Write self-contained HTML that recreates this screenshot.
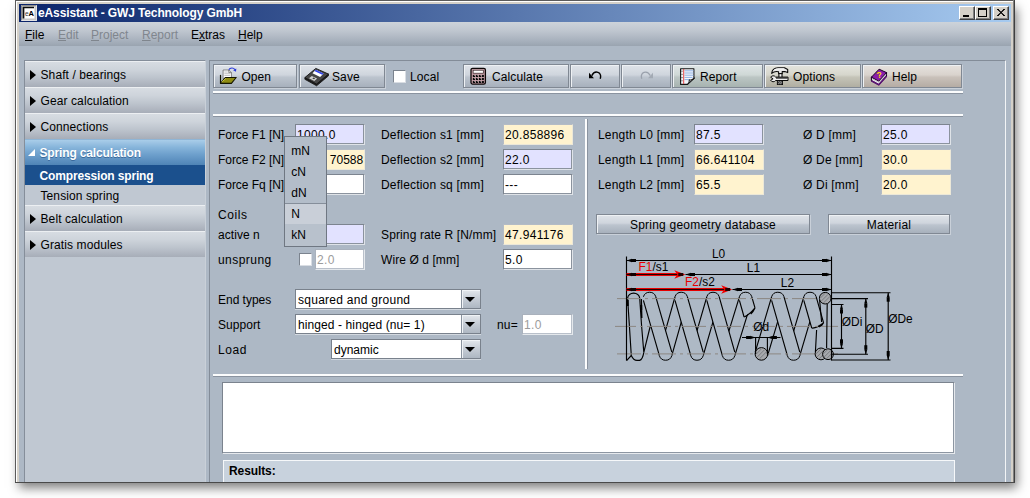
<!DOCTYPE html>
<html>
<head>
<meta charset="utf-8">
<title>eAssistant - GWJ Technology GmbH</title>
<style>
html,body{margin:0;padding:0;background:#fff;}
body{width:1030px;height:498px;overflow:hidden;position:relative;font-family:"Liberation Sans",sans-serif;font-size:12px;color:#000;}
.abs{position:absolute;}
div,span,i,b{box-sizing:border-box;}
#shadow{position:absolute;left:20px;top:6px;width:992px;height:474px;box-shadow:2px 5px 10px 3px rgba(0,0,0,.5);}
#frame{position:absolute;left:15px;top:0;width:1000px;height:483px;background:#d4d0c8;border-left:1px solid #5a5a5a;border-top:1px solid #5a5a5a;}
#frame2{position:absolute;left:16px;top:1px;width:997px;height:482px;border-left:1px solid #fff;border-top:1px solid #fff;}
#frameR{position:absolute;left:1013px;top:0;width:2px;height:483px;background:linear-gradient(90deg,#808080 50%,#404040 50%);}
#frameB{position:absolute;left:15px;top:482px;width:1000px;height:1px;background:#4a4a4a;}
#client{position:absolute;left:19px;top:22px;width:992px;height:460px;background:#adb8c5;}
#title{position:absolute;left:19px;top:4px;width:992px;height:18px;background:linear-gradient(90deg,#0a246a 0%,#a6caf0 100%);}
#title .txt{position:absolute;left:19px;top:0.6px;font-weight:bold;font-size:12px;color:#fff;letter-spacing:-0.12px;line-height:16px;white-space:nowrap;}
.cap{position:absolute;top:6px;width:16px;height:14px;background:#d4d0c8;border:1px solid #fff;border-right-color:#404040;border-bottom-color:#404040;box-shadow:inset -1px -1px 0 #808080;}
#menubar{position:absolute;left:19px;top:22px;width:992px;height:24px;background:linear-gradient(180deg,#cdd3da 0%,#c0c7d0 35%,#a9b2be 75%,#9aa4b0 100%);}
#menubar span{position:absolute;top:6px;line-height:15px;white-space:nowrap;}
#menubar .dis{color:#80868e;}
u{text-decoration:underline;text-underline-offset:1px;}
#left{position:absolute;left:24px;top:60px;width:182px;height:422px;background:#c0c8d2;border-left:1px solid #858e9a;border-top:1px solid #858e9a;border-right:1px solid #c9d0d8;}
.acc{position:absolute;left:25px;width:180px;height:26px;background:linear-gradient(180deg,#d7dce2 0%,#ced4db 30%,#bdc4cd 62%,#a7adb8 100%);border-top:1px solid #eceff2;}
.acc span{position:absolute;left:15.5px;top:5px;line-height:16px;white-space:nowrap;letter-spacing:0.1px;}
.acc i{position:absolute;left:5px;top:7.5px;width:0;height:0;border-left:6px solid #000;border-top:5px solid transparent;border-bottom:5px solid transparent;}
.acc.sel{background:linear-gradient(180deg,#a9cde9 0%,#86b4da 30%,#6c9ecb 60%,#4f84b6 100%);border-top:1px solid #8fb5d6;border-bottom:0;color:#fff;font-weight:bold;text-shadow:0 1px 0 #3a6a9c;}
.acc.sel span,.sub.sel span{letter-spacing:-0.15px;left:14.5px;}
.acc.sel i{left:3px;top:9px;border:0;border-bottom:7px solid #fff;border-left:7px solid transparent;}
.sub{position:absolute;left:25px;width:180px;height:20px;}
.sub span{position:absolute;left:15.5px;top:3px;line-height:16px;white-space:nowrap;letter-spacing:0.1px;}
.sub.sel{background:#1b508d;color:#fff;font-weight:bold;}
#main{position:absolute;left:209px;top:60px;width:797px;height:422px;border:1px solid #838c98;border-right-color:#f2f4f6;border-bottom:0;background:#adb8c5;}
.tb{position:absolute;top:64px;height:24px;border:1px solid #808893;background:linear-gradient(180deg,#dfe3e9 0%,#cfd5dd 45%,#bcc4ce 55%,#a7b0bc 100%);box-shadow:inset 1px 1px 0 #eef1f4,1px 1px 0 #c9d0d9;}
.tb span{position:absolute;top:5px;line-height:15px;white-space:nowrap;letter-spacing:0.1px;}
.hsep{position:absolute;height:3px;border-bottom:1px solid #8a93a0;background:#fbfcfd;}
.vsep{position:absolute;width:3px;border-right:1px solid #8a93a0;background:#fbfcfd;}
.lbl{position:absolute;line-height:14px;white-space:nowrap;letter-spacing:0.2px;}
.fld{position:absolute;height:21px;width:70px;border:1px solid #7c848f;border-right-color:#dfe3e8;border-bottom-color:#dfe3e8;box-shadow:inset -1px -1px 0 #8b939e;background:#fff;line-height:21px;padding-left:1px;white-space:nowrap;overflow:hidden;letter-spacing:0.32px;}
.fld.b{background:#e2e2ff;}
.fld.y{background:#fff3cf;border-color:#b4bbc5;border-right-color:#ece8d8;border-bottom-color:#ece8d8;box-shadow:none;}
.fld.g{color:#9c9c9c;border-color:#a9b1bc;border-right-color:#e4e8ec;border-bottom-color:#e4e8ec;box-shadow:inset -1px -1px 0 #b9c0ca;}
.btn{position:absolute;height:20px;border:1px solid #808893;background:linear-gradient(180deg,#dfe3e9 0%,#cfd5dd 45%,#bcc4ce 55%,#a7b0bc 100%);box-shadow:inset 1px 1px 0 #eef1f4,1px 1px 0 #c9d0d9;text-align:center;line-height:20px;letter-spacing:0.22px;}
.combo{position:absolute;height:20px;border:1px solid #79818c;box-shadow:0 1px 0 #d3d9e0;background:#fff;line-height:20px;padding-left:2px;white-space:nowrap;letter-spacing:0.27px;}
.combo b{position:absolute;right:0;top:0;width:19px;height:18px;box-shadow:inset 1px 1px 0 #f0f3f6;background:linear-gradient(180deg,#e3e7ec,#c5ccd5 50%,#aeb7c2);border-left:1px solid #8a939f;}
.combo b:after{content:"";position:absolute;left:3.3px;top:6.500px;border-top:5px solid #000;border-left:5px solid transparent;border-right:5px solid transparent;}
#popup{position:absolute;left:284px;top:136px;width:43px;height:111px;border:1px solid #6f7782;background:#b3bdc9;}
#popup span{position:absolute;left:6.3px;line-height:14px;}
</style>
</head>
<body>
<div id="shadow"></div>
<div id="frame"></div><div id="frame2"></div><div id="frameR"></div>
<div id="client"></div>
<div id="title">
  <svg class="abs" style="left:2px;top:1px" width="16" height="16" viewBox="0 0 16 16"><rect width="16" height="16" fill="#c6c6c6"/><path d="M.5 15.500V.5H15.500" stroke="#8e8e8e" stroke-width="1" fill="none"/><path d="M15.500.5V15.500H.5" stroke="#e4e4e4" stroke-width="1" fill="none"/><rect x="2" y="2" width="11.500" height="11.500" fill="#fff"/><path d="M2.500 13.500V2.500H13" stroke="#0c0c0c" stroke-width="1.700" fill="none"/><text x="4" y="10.800" font-family="Liberation Sans, sans-serif" font-size="6.500" fill="#333">e</text><text x="7.600" y="10.800" font-family="Liberation Sans, sans-serif" font-size="7.500" font-weight="bold" fill="#000">A</text></svg>
  <div class="txt">eAssistant - GWJ Technology GmbH</div>
</div>
<div class="cap" style="left:959px"><i class="abs" style="left:3px;top:8px;width:6px;height:2px;background:#000"></i></div>
<div class="cap" style="left:975px"><i class="abs" style="left:2px;top:1px;width:9px;height:9px;border:1px solid #000;border-top-width:2px"></i></div>
<div class="cap" style="left:993px"><svg class="abs" style="left:3px;top:2px" width="8" height="7" viewBox="0 0 8 7"><path d="M0 0L8 7M1 0L7 7M8 0L0 7M7 0L1 7" stroke="#000" stroke-width="1"/></svg></div>
<div id="menubar">
  <span style="left:6px"><u>F</u>ile</span>
  <span class="dis" style="left:39px"><u>E</u>dit</span>
  <span class="dis" style="left:72px"><u>P</u>roject</span>
  <span class="dis" style="left:123px"><u>R</u>eport</span>
  <span style="left:172px">E<u>x</u>tras</span>
  <span style="left:219px"><u>H</u>elp</span>
</div>
<div id="left"></div>
<div class="acc" style="top:61px"><i></i><span>Shaft / bearings</span></div>
<div class="acc" style="top:87px"><i></i><span>Gear calculation</span></div>
<div class="acc" style="top:113px"><i></i><span>Connections</span></div>
<div class="acc sel" style="top:139px"><i></i><span>Spring calculation</span></div>
<div class="sub sel" style="top:165px"><span>Compression spring</span></div>
<div class="sub" style="top:185px"><span>Tension spring</span></div>
<div class="acc" style="top:205px"><i></i><span>Belt calculation</span></div>
<div class="acc" style="top:231px"><i></i><span>Gratis modules</span></div>
<div id="main"></div>
<div class="tb" style="left:213px;width:84px"><svg class="abs" style="left:4px;top:1px" width="20" height="20" viewBox="0 0 20 20"><path d="M2.500 8.900V17.400" stroke="#151500" stroke-width="1.200"/><path d="M5.100 4h5.700l2.600 2.700v6.100H5.100z" fill="#fff" stroke="#6a6a6a" stroke-width=".8" stroke-linejoin="round"/><path d="M10.800 4v2.700h2.600" fill="none" stroke="#555" stroke-width=".7"/><path d="M6.300 6h3.500M6.300 7.700h5.800M6.300 9.400h5.800" stroke="#b4b4b4" stroke-width=".8"/><path d="M2.500 17.400H13.400L18.200 11.500H7.300z" fill="#8f8c12" stroke="#151500" stroke-width="1.100" stroke-linejoin="round"/><path d="M3.600 16.200l4.200-3.800" stroke="#d9d24a" stroke-width=".9"/><path d="M10.800 3.800C12 1.600 15.600 1.400 17 3.800" fill="none" stroke="#2a39d8" stroke-width="1.100"/><path d="M18.300 2.400l-.3 3.400-2.900-1.500z" fill="#2a39d8"/></svg><span style="left:27.4px">Open</span></div>
<div class="tb" style="left:299px;width:86px"><svg class="abs" style="left:4px;top:2px" width="25" height="20" viewBox="0 0 25 20"><path d="M.9 10.600v1.700l11.700 6.500 11.900-10v-1.700z" fill="#1c1c1c" stroke="#111" stroke-width=".8" stroke-linejoin="round"/><path d="M.9 10.600L11.800 1.400l12.700 5.700-11.900 10z" fill="#464646" stroke="#161616" stroke-width=".9" stroke-linejoin="round"/><path d="M11.700 2.800l7.900 3.600-3.500 3.500-7.600-3.700z" fill="#fff"/><path d="M11.700 2.800l7.900 3.600-1.300 1.300-8-3.600z" fill="#2f43ea"/><path d="M5 11.300l2.800-2.400 5.300 2.700-2.800 2.500z" fill="#cfcfcf"/><path d="M8.300 11.400l1.200-1 1.700.9-1.200 1z" fill="#3a3a3a"/></svg><span style="left:32px">Save</span></div>
<div class="abs" style="left:393px;top:70px;width:13px;height:13px;background:#fff;border:1px solid #7b838e;border-right-color:#d9dde3;border-bottom-color:#d9dde3"></div>
<div class="lbl" style="left:410px;top:70px;letter-spacing:.1px">Local</div>
<div class="tb" style="left:463px;width:106px"><svg class="abs" style="left:6px;top:2px" width="17" height="19" viewBox="0 0 17 19"><rect x="1" y="1.300" width="14.400" height="15.800" rx="1.600" fill="#cba4ac" stroke="#0c0606" stroke-width="1.300"/><rect x="3.100" y="3.200" width="10.200" height="3" fill="#fff" stroke="#2a1a1c" stroke-width=".7"/><g fill="#0a0a0a"><rect x="2.800" y="7.900" width="2.300" height="2.100"/><rect x="5.900" y="7.900" width="2.300" height="2.100"/><rect x="9" y="7.900" width="2.300" height="2.100"/><rect x="12" y="7.900" width="1.900" height="2.100"/><rect x="2.800" y="10.900" width="2.300" height="2.100"/><rect x="5.900" y="10.900" width="2.300" height="2.100"/><rect x="9" y="10.900" width="2.300" height="2.100"/><rect x="12" y="10.900" width="1.900" height="2.100"/><rect x="2.800" y="13.900" width="2.300" height="2.100"/><rect x="5.900" y="13.900" width="2.300" height="2.100"/><rect x="9" y="13.900" width="2.300" height="2.100"/><rect x="12" y="13.900" width="1.900" height="2.100"/></g><g fill="#f0e4e6"><rect x="4.300" y="7.900" width=".8" height=".8"/><rect x="7.400" y="7.900" width=".8" height=".8"/><rect x="10.500" y="7.900" width=".8" height=".8"/><rect x="4.300" y="10.900" width=".8" height=".8"/><rect x="7.400" y="10.900" width=".8" height=".8"/><rect x="10.500" y="10.900" width=".8" height=".8"/><rect x="4.300" y="13.900" width=".8" height=".8"/><rect x="7.400" y="13.900" width=".8" height=".8"/><rect x="10.500" y="13.900" width=".8" height=".8"/></g></svg><span style="left:28px">Calculate</span></div>
<div class="tb" style="left:570px;width:50px"><svg class="abs" style="left:17px;top:6px" width="15" height="11" viewBox="0 0 15 11"><path d="M1 1.800v5.400h5z" fill="#000"/><path d="M3.800 4.600C5.200 1.600 8 .7 10 1.300c2.600.8 3.100 3.800 2.200 6.500" fill="none" stroke="#000" stroke-width="1.400"/></svg></div>
<div class="tb" style="left:621px;width:50px"><svg class="abs" style="left:17px;top:6px" width="15" height="11" viewBox="0 0 15 11"><path d="M14 1.800v5.400h-5z" fill="#a3aab4"/><path d="M11.200 4.600C9.800 1.600 7 .7 5 1.300c-2.600.8-3.100 3.800-2.200 6.500" fill="none" stroke="#9aa1ac" stroke-width="1.300"/></svg></div>
<div class="tb" style="left:672px;width:91px;background:linear-gradient(180deg,#dfe5e6 0%,#cfd8d6 45%,#bcc6c4 55%,#a7b3b0 100%)"><svg class="abs" style="left:6px;top:2px" width="18" height="19" viewBox="0 0 18 19"><path d="M1.600 1.700h13.300v9.500l-6.300 6.200h-7z" fill="#f3f6fb" stroke="#141414" stroke-width="1.100" stroke-linejoin="round"/><path d="M5.500 3.800h9M5.500 6h9M5.500 8.200h9M5.500 10.400h8M5.500 12.600h5" stroke="#8fb2e6" stroke-width="1"/><path d="M4.700 2v15" stroke="#e84848" stroke-width="1"/><path d="M2.400 4.200h1.200M2.400 7.400h1.200M2.400 10.600h1.200M2.400 13.800h1.200" stroke="#555" stroke-width="1"/><path d="M8.400 17.400c1.400-1.200 2-2.800 1.800-4.600 1.900.5 3.700-.2 5.500-1.800z" fill="#b9bcc2" stroke="#141414" stroke-width="1" stroke-linejoin="round"/></svg><span style="left:27px">Report</span></div>
<div class="tb" style="left:764px;width:97px;background:linear-gradient(180deg,#e4e4de 0%,#d6d6cc 45%,#c5c4b8 55%,#b0aea2 100%)"><svg class="abs" style="left:3px;top:0" width="22" height="22" viewBox="0 0 22 22"><path d="M3.700 8.300C4 5 6.500 3 10 2.800h6.500l3.200 1.800v3l-2.900-1h-2.600v2h-3.600V6.800C8 6.200 5.500 6.800 3.700 8.300z" fill="#e9e9e9" stroke="#0a0a0a" stroke-width="1.100" stroke-linejoin="round"/><path d="M5.500 5.600c1.400-1.400 3.500-1.900 5.500-1.700h5" stroke="#fff" stroke-width="1" fill="none"/><rect x="10.900" y="8.600" width="3.100" height="10.600" fill="#f6f6f6" stroke="#0a0a0a" stroke-width="1.100"/><path d="M2.700 12.300C3.500 10.400 6.500 10.200 7.600 12.100H20v3.400H7.600C6.500 17.300 3.500 17.100 2.700 15.300L5.100 13.800z" fill="#ededed" stroke="#0a0a0a" stroke-width="1" stroke-linejoin="round"/><path d="M8 13h11.500" stroke="#111" stroke-width="1.200"/><rect x="9.300" y="15.600" width="5.300" height="4" fill="#2e2e2e" stroke="#0a0a0a" stroke-width=".8"/><path d="M10.300 16.700h1M12.300 16.700h1M11.300 17.700h1M13.300 17.700h.8M10.300 18.700h1M12.300 18.700h1" stroke="#c8c8c8" stroke-width=".9"/></svg><span style="left:28px">Options</span></div>
<div class="tb" style="left:862px;width:100px;background:linear-gradient(180deg,#e6e2de 0%,#d9d3cd 45%,#c9c1ba 55%,#b5aca4 100%)"><svg class="abs" style="left:7px;top:3px" width="18" height="18" viewBox="0 0 18 18"><path d="M1.400 9.200v3.600l7.400 3.900 7.700-8.600V4.600z" fill="#f4f0f6" stroke="#1c0026" stroke-width="1.100" stroke-linejoin="round"/><path d="M1.400 12.800l7.400 3.900 7.700-8.600" stroke="#5c1474" stroke-width="1.600" fill="none"/><path d="M2.200 10.800l6.600 3.500 7.200-8" stroke="#b9b2be" stroke-width=".8" fill="none"/><path d="M1.400 9.200l7.700-8 7.400 3.400-7.700 8.500z" fill="#8a1eaa" stroke="#1c0026" stroke-width="1" stroke-linejoin="round"/><text x="9.200" y="10" font-family="Liberation Sans, sans-serif" font-size="8.500" font-weight="bold" fill="#ffe100" text-anchor="middle" transform="rotate(-10 9 7)">?</text></svg><span style="left:29px">Help</span></div>
<div class="hsep" style="left:213px;top:91px;width:750px"></div>
<div class="hsep" style="left:213px;top:114px;width:750px"></div>

<div class="lbl" style="left:218px;top:128px;letter-spacing:-0.05px">Force F1 [N]</div>
<div class="lbl" style="left:218px;top:153px;letter-spacing:-0.05px">Force F2 [N]</div>
<div class="lbl" style="left:218px;top:178px;letter-spacing:-0.05px">Force Fq [N]</div>
<div class="lbl" style="left:218px;top:208px;letter-spacing:0.6px">Coils</div>
<div class="lbl" style="left:218px;top:228px;letter-spacing:0.06px">active n</div>
<div class="lbl" style="left:218px;top:253px;letter-spacing:.45px">unsprung</div>
<div class="lbl" style="left:218px;top:293px;letter-spacing:-0.02px">End types</div>
<div class="lbl" style="left:218px;top:318px;letter-spacing:0.07px">Support</div>
<div class="lbl" style="left:218px;top:343px;letter-spacing:.55px">Load</div>
<div class="fld b" style="left:295px;top:124px">1000.0</div>
<div class="fld y" style="left:295px;top:149px;text-align:right;padding-right:0.8px;letter-spacing:0"><span style="visibility:hidden">47.9</span>70588</div>
<div class="fld" style="left:295px;top:174px">---</div>
<div class="fld b" style="left:295px;top:224px">8.0</div>
<div class="abs" style="left:299px;top:253px;width:13px;height:13px;background:#fff;border:1px solid #7b838e;border-right-color:#d9dde3;border-bottom-color:#d9dde3"></div>
<div class="fld g" style="left:315px;top:249px;width:50px">2.0</div>
<div class="lbl" style="left:381px;top:128px">Deflection s1 [mm]</div>
<div class="lbl" style="left:381px;top:153px">Deflection s2 [mm]</div>
<div class="lbl" style="left:381px;top:178px">Deflection sq [mm]</div>
<div class="lbl" style="left:381px;top:228px;letter-spacing:0.13px">Spring rate R [N/mm]</div>
<div class="lbl" style="left:381px;top:253px;letter-spacing:0.08px">Wire Ø d [mm]</div>
<div class="fld y" style="left:503px;top:124px">20.858896</div>
<div class="fld b" style="left:503px;top:149px">22.0</div>
<div class="fld" style="left:503px;top:174px">---</div>
<div class="fld y" style="left:503px;top:224px">47.941176</div>
<div class="fld" style="left:503px;top:249px">5.0</div>
<div class="combo" style="left:295px;top:289px;width:186px">squared and ground<b></b></div>
<div class="combo" style="left:295px;top:314px;width:186px;letter-spacing:.1px">hinged - hinged (nu= 1)<b></b></div>
<div class="combo" style="left:331px;top:339px;width:150px;letter-spacing:0">dynamic<b></b></div>
<div class="lbl" style="left:497px;top:318px">nu=</div>
<div class="fld g" style="left:522px;top:314px;width:51px">1.0</div>
<div class="vsep" style="left:585px;top:119px;height:250px"></div>
<div class="lbl" style="left:598px;top:128px">Length L0 [mm]</div>
<div class="lbl" style="left:598px;top:153px">Length L1 [mm]</div>
<div class="lbl" style="left:598px;top:178px">Length L2 [mm]</div>
<div class="fld b" style="left:694px;top:124px">87.5</div>
<div class="fld y" style="left:694px;top:149px">66.641104</div>
<div class="fld y" style="left:694px;top:174px">65.5</div>
<div class="lbl" style="left:803px;top:128px">Ø D [mm]</div>
<div class="lbl" style="left:803px;top:153px">Ø De [mm]</div>
<div class="lbl" style="left:803px;top:178px">Ø Di [mm]</div>
<div class="fld b" style="left:881px;top:124px">25.0</div>
<div class="fld y" style="left:881px;top:149px">30.0</div>
<div class="fld y" style="left:881px;top:174px">20.0</div>
<div class="btn" style="left:596px;top:214px;width:214px">Spring geometry database</div>
<div class="btn" style="left:828px;top:214px;width:122px">Material</div>
<div id="popup">
  <div class="abs" style="left:0;top:66px;width:41px;height:21px;background:#c9cfd8;border-top:1px solid #858e9a"></div>
  <div class="abs" style="left:0;top:87px;width:41px;height:22px;background:#b8c1cc"></div>
  <span style="top:7px">mN</span><span style="top:28px">cN</span><span style="top:49px">dN</span><span style="top:70px">N</span><span style="top:91px">kN</span>
</div>

<svg class="abs" style="left:615px;top:245px" width="330" height="125" viewBox="0 0 330 125" font-family="Liberation Sans, sans-serif" font-size="11.9px"><path d="M12.6,53.2 A6.1,5.9 0 0 1 24.7,53.2 L26.6,81.0 L28.8,107.3 L35.3,81.0 M12.6,53.2 L14.4,81.0 L16.3,110.5 L11.6,115.6 M16.3,110.5 Q18.5,115.4 22.0,115.4 L24.6,115.4 Q27.6,114.5 28.8,107.3 M26.4,54.0 L26.9,73.0" stroke="#000" stroke-width="1.15" fill="none"/>
<path d="M12.7,55.0 L12.7,61.0 M26.2,60.0 L26.2,65.0" stroke="#000" stroke-width="2" fill="none"/>
<path d="M44.4,107.1 L60.0,51.8 M56.8,110.7 L72.4,55.4" stroke="#000" stroke-width="1.15" fill="none"/>
<path d="M75.8,107.1 L91.8,51.8 M88.2,110.7 L104.2,55.4" stroke="#000" stroke-width="1.15" fill="none"/>
<path d="M107.4,107.1 L124.4,51.8 M119.8,110.7 L136.8,55.4" stroke="#000" stroke-width="1.15" fill="none"/>
<path d="M140.2,107.1 L156.6,51.8 M152.6,110.7 L169.0,55.4" stroke="#000" stroke-width="1.15" fill="none"/>
<path d="M172.4,107.1 L188.8,51.8 M184.8,110.7 L201.2,55.4" stroke="#000" stroke-width="1.15" fill="none"/>
<path d="M28.4,55.4 L44.4,110.7 L56.8,107.1 L40.8,51.8 Z" fill="#aeb9c5" stroke="none"/>
<path d="M28.4,55.4 L44.4,110.7 M56.8,107.1 L40.8,51.8" stroke="#000" stroke-width="1.15" fill="none"/>
<path d="M60.0,55.4 L75.8,110.7 L88.2,107.1 L72.4,51.8 Z" fill="#aeb9c5" stroke="none"/>
<path d="M60.0,55.4 L75.8,110.7 M88.2,107.1 L72.4,51.8" stroke="#000" stroke-width="1.15" fill="none"/>
<path d="M91.8,55.4 L107.4,110.7 L119.8,107.1 L104.2,51.8 Z" fill="#aeb9c5" stroke="none"/>
<path d="M91.8,55.4 L107.4,110.7 M119.8,107.1 L104.2,51.8" stroke="#000" stroke-width="1.15" fill="none"/>
<path d="M124.4,55.4 L129.1,72.0 L140.0,62.9 L136.8,51.8 Z" fill="#aeb9c5" stroke="none"/>
<path d="M124.4,55.4 L129.1,72.0 M140.0,62.9 L136.8,51.8" stroke="#000" stroke-width="1.15" fill="none"/>
<path d="M129.1,72.0 Q133.5,70.6 140.0,62.9 Q138.5,66.3 135.8,69.0" stroke="#000" stroke-width="1.15" fill="none"/>
<path d="M156.6,55.4 L172.4,110.7 L184.8,107.1 L169.0,51.8 Z" fill="#aeb9c5" stroke="none"/>
<path d="M156.6,55.4 L172.4,110.7 M184.8,107.1 L169.0,51.8" stroke="#000" stroke-width="1.15" fill="none"/>
<path d="M188.8,55.4 L196.7,83.0 L208.6,77.8 L201.2,51.8 Z" fill="#aeb9c5" stroke="none"/>
<path d="M188.8,55.4 L196.7,83.0 M208.6,77.8 L201.2,51.8" stroke="#000" stroke-width="1.15" fill="none"/>
<path d="M196.7,83.0 Q201.7,83.6 208.6,77.8 Q207.1,81.2 203.9,82.0" stroke="#000" stroke-width="1.15" fill="none"/>
<path d="M28.4,51.8 A6.5,6.5 0 0 1 40.8,51.8" fill="#aeb9c5" stroke="#000" stroke-width="1"/>
<path d="M60.0,51.8 A6.5,6.5 0 0 1 72.4,51.8" fill="#aeb9c5" stroke="#000" stroke-width="1"/>
<path d="M91.8,51.8 A6.5,6.5 0 0 1 104.2,51.8" fill="#aeb9c5" stroke="#000" stroke-width="1"/>
<path d="M124.4,51.8 A6.5,6.5 0 0 1 136.8,51.8" fill="#aeb9c5" stroke="#000" stroke-width="1"/>
<path d="M156.6,51.8 A6.5,6.5 0 0 1 169.0,51.8" fill="#aeb9c5" stroke="#000" stroke-width="1"/>
<path d="M188.8,51.8 A6.5,6.5 0 0 1 201.2,51.8" fill="#aeb9c5" stroke="#000" stroke-width="1"/>
<path d="M44.4,110.7 A6.5,6.5 0 0 0 56.8,110.7" fill="#aeb9c5" stroke="#000" stroke-width="1"/>
<path d="M75.8,110.7 A6.5,6.5 0 0 0 88.2,110.7" fill="#aeb9c5" stroke="#000" stroke-width="1"/>
<path d="M107.4,110.7 A6.5,6.5 0 0 0 119.8,110.7" fill="#aeb9c5" stroke="#000" stroke-width="1"/>
<path d="M172.4,110.7 A6.5,6.5 0 0 0 184.8,110.7" fill="#aeb9c5" stroke="#000" stroke-width="1"/>
<line x1="2" y1="53.6" x2="223" y2="53.6" stroke="#8c8782" stroke-width="1" stroke-dasharray="24 4 3 4"/>
<line x1="-3" y1="81.4" x2="223" y2="81.4" stroke="#8c8782" stroke-width="1" stroke-dasharray="24 4 3 4"/>
<line x1="2" y1="108.9" x2="223" y2="108.9" stroke="#8c8782" stroke-width="1" stroke-dasharray="24 4 3 4"/>
<circle cx="146.4" cy="108.9" r="6.3" fill="#a6a8ac" stroke="#000" stroke-width="1"/>
<path d="M142.4,111.9 L149.4,104.9 M144.4,113.9 L151.4,106.9 M141.4,108.9 L146.4,103.9" stroke="#6f7276" stroke-width="0.8" fill="none"/>
<circle cx="210.2" cy="53.2" r="5.8" fill="#a6a8ac" stroke="#000" stroke-width="1"/>
<path d="M206.2,56.2 L213.2,49.2 M208.2,58.2 L215.2,51.2 M205.2,53.2 L210.2,48.2" stroke="#6f7276" stroke-width="0.8" fill="none"/>
<circle cx="206.0" cy="108.9" r="5.9" fill="#a6a8ac" stroke="#000" stroke-width="1"/>
<path d="M202.0,111.9 L209.0,104.9 M204.0,113.9 L211.0,106.9 M201.0,108.9 L206.0,103.9" stroke="#6f7276" stroke-width="0.8" fill="none"/>
<circle cx="213.0" cy="109.2" r="5.4" fill="#a6a8ac" stroke="#000" stroke-width="1"/>
<path d="M209.0,112.2 L216.0,105.2 M211.0,114.2 L218.0,107.2 M208.0,109.2 L213.0,104.2" stroke="#6f7276" stroke-width="0.8" fill="none"/>
<path d="M204.6,55.0 L206.6,77.0 M212.2,59.0 L211.6,103.0 M200.4,107.0 L201.6,85.0" stroke="#000" stroke-width="1.15" fill="none"/>
<path d="M11.5,11.5 L11.5,115.5 M216.5,11.5 L216.5,115.5" stroke="#000" stroke-width="1.15" fill="none"/>
<path d="M11.5,15.5 L216.5,15.5 M70.5,29.5 L216.5,29.5 M117.5,44.5 L216.5,44.5" stroke="#000" stroke-width="1.15" fill="none"/>
<path d="M11.5,15.5 L17.0,13.8 L17.0,17.2 Z" fill="#000"/><rect x="16.5" y="14.0" width="4.5" height="3" fill="#000"/>
<path d="M216.5,15.5 L211.0,13.8 L211.0,17.2 Z" fill="#000"/><rect x="207.0" y="14.0" width="4.5" height="3" fill="#000"/>
<path d="M70.5,29.5 L76.0,27.8 L76.0,31.2 Z" fill="#000"/><rect x="75.5" y="28.0" width="4.5" height="3" fill="#000"/>
<path d="M216.5,29.5 L211.0,27.8 L211.0,31.2 Z" fill="#000"/><rect x="207.0" y="28.0" width="4.5" height="3" fill="#000"/>
<path d="M117.5,44.5 L123.0,42.8 L123.0,46.2 Z" fill="#000"/><rect x="122.5" y="43.0" width="4.5" height="3" fill="#000"/>
<path d="M216.5,44.5 L211.0,42.8 L211.0,46.2 Z" fill="#000"/><rect x="207.0" y="43.0" width="4.5" height="3" fill="#000"/>
<path d="M11.5,29.5 L68.0,29.5 M11.5,44.5 L115.0,44.5" stroke="#e80000" stroke-width="3.2" fill="none"/>
<path d="M11.5,29.5 L68.0,29.5 M11.5,44.5 L115.0,44.5" stroke="#200000" stroke-width="1" fill="none"/>
<path d="M70.3,29.5 L59.3,25.2 L62.3,29.5 L59.3,33.8 Z" fill="#f00000"/>
<rect x="63.3" y="28.0" width="5" height="3" fill="#200"/>
<path d="M117.2,44.5 L106.2,40.2 L109.2,44.5 L106.2,48.8 Z" fill="#f00000"/>
<rect x="110.2" y="43.0" width="5" height="3" fill="#200"/>
<path d="M11.5,29.5 L17.0,27.8 L17.0,31.2 Z" fill="#100"/><rect x="16.5" y="28.0" width="4.5" height="3" fill="#100"/>
<path d="M11.5,44.5 L17.0,42.8 L17.0,46.2 Z" fill="#100"/><rect x="16.5" y="43.0" width="4.5" height="3" fill="#100"/>
<path d="M216.5,47.7 L275.5,47.7 M216.5,53.6 L253.0,53.6 M216.5,59.5 L228.5,59.5 M216.5,103.3 L228.5,103.3 M216.5,109.2 L253.0,109.2 M216.5,115.0 L275.5,115.0" stroke="#000" stroke-width="1.15" fill="none"/>
<path d="M226.5,59.5 L226.5,103.3 M250.8,53.6 L250.8,109.2 M273.2,47.7 L273.2,115.0" stroke="#000" stroke-width="1.15" fill="none"/>
<path d="M226.5,59.5 L224.9,64.5 L228.1,64.5 Z" fill="#000"/><rect x="225.0" y="64.5" width="3" height="4" fill="#000"/>
<path d="M226.5,103.3 L224.9,98.3 L228.1,98.3 Z" fill="#000"/><rect x="225.0" y="94.3" width="3" height="4" fill="#000"/>
<path d="M250.8,53.6 L249.2,58.6 L252.4,58.6 Z" fill="#000"/><rect x="249.3" y="58.6" width="3" height="4" fill="#000"/>
<path d="M250.8,109.2 L249.2,104.2 L252.4,104.2 Z" fill="#000"/><rect x="249.3" y="100.2" width="3" height="4" fill="#000"/>
<path d="M273.2,47.7 L271.6,52.7 L274.8,52.7 Z" fill="#000"/><rect x="271.7" y="52.7" width="3" height="4" fill="#000"/>
<path d="M273.2,115.0 L271.6,110.0 L274.8,110.0 Z" fill="#000"/><rect x="271.7" y="106.0" width="3" height="4" fill="#000"/>
<path d="M127.0,92.5 L165.5,92.5 M140.6,92.5 L140.6,109.0 M152.4,92.5 L152.4,109.0" stroke="#000" stroke-width="1.15" fill="none"/>
<path d="M140.6,92.5 L135.1,90.8 L135.1,94.2 Z" fill="#000"/><rect x="131.1" y="91.0" width="4.5" height="3" fill="#000"/>
<path d="M152.4,92.5 L157.9,90.8 L157.9,94.2 Z" fill="#000"/><rect x="157.4" y="91.0" width="4.5" height="3" fill="#000"/>
<text x="97.0" y="13.2" fill="#000" >L0</text>
<text x="131.8" y="27.4" fill="#000" >L1</text>
<text x="165.8" y="42.2" fill="#000" >L2</text>
<text x="23.6" y="25.8"><tspan fill="#e80000">F1</tspan>/s1</text>
<text x="70.0" y="41.2"><tspan fill="#e80000">F2</tspan>/s2</text>
<text x="138.2" y="86.4" fill="#000" >Ød</text>
<text x="226.8" y="80.8" fill="#000" >ØDi</text>
<text x="250.8" y="88.4" fill="#000" >ØD</text>
<text x="273.2" y="77.6" fill="#000" >ØDe</text></svg>
<div class="hsep" style="left:213px;top:374px;width:750px"></div>
<div class="abs" style="left:222px;top:382px;width:733px;height:72px;background:#fff;border:1px solid #7b838e;border-right-color:#e6e9ed;border-bottom-color:#e6e9ed;box-shadow:inset -1px -1px 0 #8d96a2"></div>
<div class="abs" style="left:223px;top:460px;width:732px;height:23px;background:#c8d2dd;border:1px solid #f6f8fa;border-bottom:0"></div>
<div class="lbl" style="left:229px;top:464px;font-weight:bold;letter-spacing:-0.1px">Results:</div>

<div id="frameB"></div>
</body>
</html>
